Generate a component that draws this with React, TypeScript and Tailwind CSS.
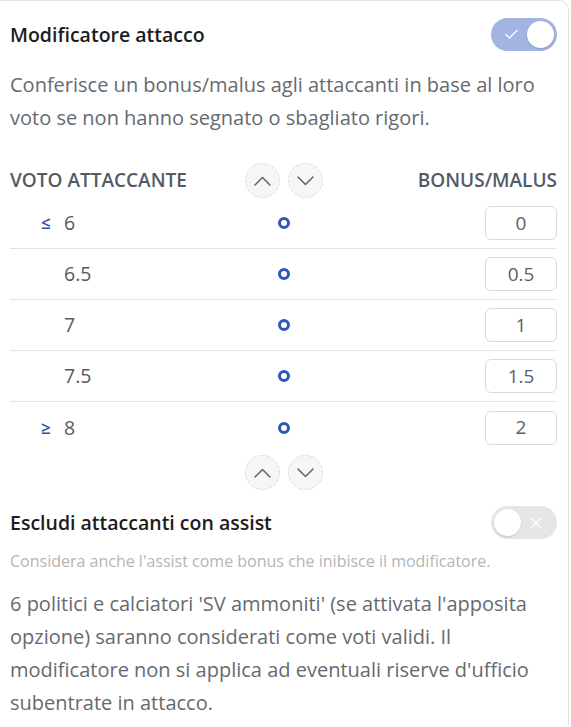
import { Check, X } from "lucide-react";

const rows = [
  { sym: "≤", voto: "6", bonus: "0" },
  { sym: "", voto: "6.5", bonus: "0.5" },
  { sym: "", voto: "7", bonus: "1" },
  { sym: "", voto: "7.5", bonus: "1.5" },
  { sym: "≥", voto: "8", bonus: "2" },
];

function Toggle({ on }: { on: boolean }) {
  return on ? (
    <div className="w-[66px] h-[33px] rounded-full bg-[#a2b4e2] flex items-center justify-between pl-[12px] pr-[3px]">
      <Check className="w-[17px] h-[17px] text-white" strokeWidth={1.8} />
      <span className="w-[27px] h-[27px] rounded-full bg-white shadow-[0_1px_2px_rgba(0,0,0,0.15)]" />
    </div>
  ) : (
    <div className="w-[66px] h-[33px] rounded-full bg-[#e6e6e6] flex items-center justify-between pl-[3px] pr-[12px]">
      <span className="w-[27px] h-[27px] rounded-full bg-white shadow-[0_1px_2px_rgba(0,0,0,0.15)]" />
      <X className="w-[18px] h-[18px] text-white" strokeWidth={1.8} />
    </div>
  );
}

function Chevron({ up }: { up?: boolean }) {
  return (
    <svg width="17" height="10" viewBox="0 0 17 10" fill="none" stroke="currentColor" strokeWidth="1.5" strokeLinecap="round" strokeLinejoin="round">
      {up ? <polyline points="1,9 8.5,1.5 16,9" /> : <polyline points="1,1 8.5,8.5 16,1" />}
    </svg>
  );
}

function Arrows() {
  return (
    <div className="flex gap-[8px]">
      <button className="w-[35px] h-[35px] rounded-full border border-dashed border-[#dcdcdc] bg-[#f6f6f6] flex items-center justify-center text-[#5c6470]">
        <Chevron up />
      </button>
      <button className="w-[35px] h-[35px] rounded-full border border-dashed border-[#dcdcdc] bg-[#f6f6f6] flex items-center justify-center text-[#5c6470]">
        <Chevron />
      </button>
    </div>
  );
}

export default function App() {
  return (
    <div className="bg-white min-h-[727px] font-['Open_Sans',sans-serif]">
      <div className="w-[569px] border-t border-r border-[#e3e3e3] rounded-tr-[10px] pl-[10px] pr-[11px] pt-[17px] pb-[6px]">
        <div className="flex items-center justify-between">
          <h2 className="text-[19.5px] font-semibold text-[#1c1c1c]">Modificatore attacco</h2>
          <Toggle on />
        </div>
        <p className="mt-[17px] pr-[10px] text-[20px] leading-[33px] text-[#666a70]">
          Conferisce un bonus/malus agli attaccanti in base al loro voto se non hanno segnato o sbagliato rigori.
        </p>

        <div className="mt-[29px] grid grid-cols-[1fr_auto_1fr] items-center">
          <div className="text-[19px] font-semibold text-[#525b66] uppercase">Voto attaccante</div>
          <Arrows />
          <div className="text-[19px] font-semibold text-[#525b66] uppercase text-right">Bonus/Malus</div>
        </div>

        <div>
          {rows.map((r, i) => (
            <div
              key={r.voto}
              className={`grid grid-cols-[1fr_auto_1fr] items-center h-[51px] ${i < rows.length - 1 ? "border-b border-[#e3e3e3]" : ""}`}
            >
              <div className="flex items-center pl-[31px] text-[19.5px] text-[#555b63]">
                <span className="w-[23px] text-[#2d4fa5] font-semibold text-[17px]">{r.sym}</span>
                <span>{r.voto}</span>
              </div>
              <span className="w-[12px] h-[12px] rounded-full border-[3px] border-[#2f57b8] bg-white" />
              <div className="flex justify-end">
                <div className="w-[72px] h-[34px] rounded-[6px] border border-[#d9d9d9] flex items-center justify-center text-[19px] text-[#5b6068]">
                  {r.bonus}
                </div>
              </div>
            </div>
          ))}
        </div>

        <div className="flex justify-center mt-[2px]">
          <Arrows />
        </div>

        <div className="mt-[16px] flex items-center justify-between">
          <h3 className="text-[19.5px] font-semibold text-[#1c1c1c]">Escludi attaccanti con assist</h3>
          <Toggle on={false} />
        </div>
        <p className="mt-[10px] text-[16px] text-[#b5b5b5]">
          Considera anche l'assist come bonus che inibisce il modificatore.
        </p>
        <p className="mt-[14px] text-[20px] leading-[33px] text-[#666a70]">
          6 politici e calciatori 'SV ammoniti' (se attivata l'apposita opzione) saranno considerati come voti validi. Il modificatore non si applica ad eventuali riserve d'ufficio subentrate in attacco.
        </p>
      </div>
    </div>
  );
}
